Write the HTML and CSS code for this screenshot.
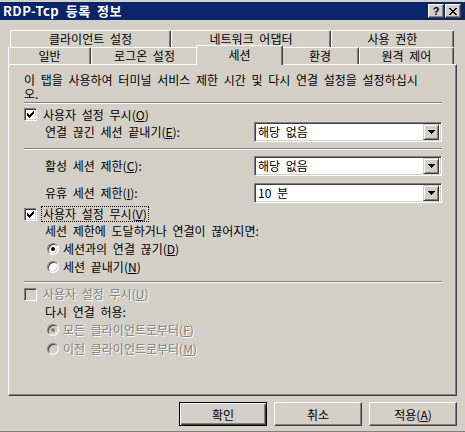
FILE: index.html
```html
<!DOCTYPE html>
<html>
<head>
    <title>RDP-Tcp 등록 정보</title>
    <link rel="stylesheet" href="styles.css">
</head>
<body>
    <div class="window">
        <div class="titlebar">
            <span class="title">RDP-Tcp 등록 정보</span>
            <div class="caption-buttons">
                <span class="caption-btn help">?</span>
                <span class="caption-btn close">
                    <svg width="8" height="7" viewBox="0 0 8 7"><path d="M0 0h2v1H0zM6 0h2v1H6zM1 1h2v1H1zM5 1h2v1H5zM2 2h4v1H2zM3 3h2v1H3zM2 4h4v1H2zM1 5h2v1H1zM5 5h2v1H5zM0 6h2v1H0zM6 6h2v1H6z" fill="#000"/></svg>
                </span>
            </div>
        </div>

        <div class="tabs">
            <div class="tab-row back-row">
                <div class="tab tab-client">클라이언트 설정</div>
                <div class="tab tab-network">네트워크 어댑터</div>
                <div class="tab tab-perm">사용 권한</div>
            </div>
            <div class="tab-row front-row">
                <div class="tab tab-general">일반</div>
                <div class="tab tab-logon">로그온 설정</div>
                <div class="tab tab-session active">세션</div>
                <div class="tab tab-env">환경</div>
                <div class="tab tab-remote">원격 제어</div>
            </div>
        </div>

        <div class="panel">
            <p class="desc">이 탭을 사용하여 터미널 서비스 제한 시간 및 다시 연결 설정을 설정하십시<br>오.</p>
            <div class="separator sep-first"></div>

            <div class="row row-override-o">
                <span class="checkbox">
                    <svg width="7" height="7" viewBox="0 0 7 7"><path d="M6 0h1v1H6zM5 1h2v1H5zM0 2h1v1H0zM4 2h3v1H4zM0 3h2v1H0zM3 3h3v1H3zM0 4h5v1H0zM1 5h3v1H1zM2 6h1v1H2z" fill="#000"/></svg>
                </span>
                <span class="check-label">사용자 설정 무시(<u>O</u>)</span>
            </div>
            <div class="row combo-row row-end">
                <span class="sub-label">연결 끊긴 세션 끝내기(<u>E</u>):</span>
                <div class="combo">
                    <span class="combo-value">해당 없음</span>
                    <span class="combo-btn"><svg width="7" height="4" viewBox="0 0 7 4"><path d="M0 0h7v1H0zM1 1h5v1H1zM2 2h3v1H2zM3 3h1v1H3z" fill="#000"/></svg></span>
                </div>
            </div>

            <div class="separator sep-second"></div>

            <div class="row combo-row row-active">
                <span class="sub-label">활성 세션 제한(<u>C</u>):</span>
                <div class="combo">
                    <span class="combo-value">해당 없음</span>
                    <span class="combo-btn"><svg width="7" height="4" viewBox="0 0 7 4"><path d="M0 0h7v1H0zM1 1h5v1H1zM2 2h3v1H2zM3 3h1v1H3z" fill="#000"/></svg></span>
                </div>
            </div>
            <div class="row combo-row row-idle">
                <span class="sub-label">유휴 세션 제한(<u>I</u>):</span>
                <div class="combo">
                    <span class="combo-value">10 분</span>
                    <span class="combo-btn"><svg width="7" height="4" viewBox="0 0 7 4"><path d="M0 0h7v1H0zM1 1h5v1H1zM2 2h3v1H2zM3 3h1v1H3z" fill="#000"/></svg></span>
                </div>
            </div>

            <div class="row row-override-v">
                <span class="checkbox">
                    <svg width="7" height="7" viewBox="0 0 7 7"><path d="M6 0h1v1H6zM5 1h2v1H5zM0 2h1v1H0zM4 2h3v1H4zM0 3h2v1H0zM3 3h3v1H3zM0 4h5v1H0zM1 5h3v1H1zM2 6h1v1H2z" fill="#000"/></svg>
                </span>
                <span class="check-label focus">사용자 설정 무시(<u>V</u>)</span>
            </div>
            <div class="row row-when">
                <span class="sub-label">세션 제한에 도달하거나 연결이 끊어지면:</span>
            </div>
            <div class="row radio-row row-gap2">
                <span class="radio checked"></span>
                <span>세션과의 연결 끊기(<u>D</u>)</span>
            </div>
            <div class="row radio-row row-gap2">
                <span class="radio"></span>
                <span>세션 끝내기(<u>N</u>)</span>
            </div>

            <div class="separator sep-third"></div>

            <div class="row row-override-u">
                <span class="checkbox disabled"></span>
                <span class="check-label grayed">사용자 설정 무시(<u>U</u>)</span>
            </div>
            <div class="row row-gap2">
                <span class="sub-label">다시 연결 허용:</span>
            </div>
            <div class="row radio-row row-gap2">
                <span class="radio checked disabled"></span>
                <span class="grayed">모든 클라이언트로부터(<u>F</u>)</span>
            </div>
            <div class="row radio-row row-gap3">
                <span class="radio disabled"></span>
                <span class="grayed">이전 클라이언트로부터(<u>M</u>)</span>
            </div>
        </div>

        <div class="buttons">
            <button class="btn default">확인</button>
            <button class="btn">취소</button>
            <button class="btn">적용(<u>A</u>)</button>
        </div>
    </div>
</body>
</html>
```

FILE: styles.css
```css
body {
    margin: 0;
    background-color: #D4D0C8;
    font-family: "Noto Sans CJK KR", "Noto Sans", sans-serif;
    font-size: 12px;
    word-spacing: 3px;
    line-height: 14px;
    color: #000000;
}

.window {
    width: 465px;
    height: 432px;
    box-sizing: border-box;
    padding-top: 2px;
    border-bottom: 1px solid #808080;
    display: flex;
    flex-direction: column;
    overflow: hidden;
}

/* title bar */
.titlebar {
    height: 18px;
    background: #0A246A;
    display: flex;
    align-items: center;
    justify-content: space-between;
    padding: 0 4px 0 3px;
}
.title {
    color: #FFFFFF;
    font-weight: bold;
    font-size: 13px;
    letter-spacing: 0.5px;
    word-spacing: 3px;
}
.caption-buttons {
    display: flex;
    gap: 1px;
}
.caption-btn {
    width: 16px;
    height: 14px;
    box-sizing: border-box;
    background: #D4D0C8;
    border-top: 1px solid #FFFFFF;
    border-left: 1px solid #FFFFFF;
    border-right: 1px solid #404040;
    border-bottom: 1px solid #404040;
    box-shadow: inset -1px -1px #808080;
    display: flex;
    align-items: center;
    justify-content: center;
}
.caption-btn.help {
    font-family: "Liberation Sans", Arial, sans-serif;
    font-weight: bold;
    font-size: 11px;
    line-height: 12px;
}

/* tabs */
.tabs {
    margin-top: 10px;
}
.tab-row {
    display: flex;
    height: 17px;
}
.back-row {
    margin-left: 10px;
}
.front-row {
    margin-left: 8px;
}
.tab {
    flex-shrink: 0;
    box-sizing: border-box;
    height: 17px;
    background: #D4D0C8;
    border-top: 1px solid #FFFFFF;
    border-left: 1px solid #FFFFFF;
    border-right: 1px solid #404040;
    box-shadow: inset -1px 0 #808080;
    border-radius: 2px 2px 0 0;
    text-align: center;
    line-height: 16px;
    white-space: nowrap;
}
.tab-client { width: 161px; }
.tab-network { width: 160px; }
.tab-perm { width: 123px; }
.tab-general { width: 83px; }
.tab-logon { width: 107px; }
.tab-session { width: 83px; }
.tab-env { width: 78px; }
.tab-remote { width: 95px; }

.tab.active {
    position: relative;
    z-index: 2;
    width: 87px;
    height: 20px;
    margin: -2px -2px 0 -2px;
    line-height: 17px;
}

/* property page */
.panel {
    position: relative;
    z-index: 1;
    height: 332px;
    margin: 0 8px;
    box-sizing: border-box;
    border-top: 1px solid #FFFFFF;
    border-left: 1px solid #FFFFFF;
    border-right: 1px solid #404040;
    border-bottom: 1px solid #404040;
    box-shadow: inset -1px -1px #808080;
    padding: 8px 14px 0 15px;
    display: flex;
    flex-direction: column;
}
.desc {
    margin: 0;
    line-height: 14px;
    white-space: nowrap;
}
.separator {
    height: 0;
    border-top: 1px solid #808080;
    border-bottom: 1px solid #FFFFFF;
}
.sep-first { margin-top: 1px; }
.sep-second { margin-top: 6px; }
.sep-third { margin-top: 6px; }

.row {
    display: flex;
    align-items: center;
    height: 16px;
    white-space: nowrap;
}
.row-override-o { margin-top: 3px; height: 15px; }
.combo-row {
    height: 20px;
    justify-content: space-between;
}
.row-active { margin-top: 6px; }
.row-idle { margin-top: 7px; }
.row-override-v { margin-top: 3px; }
.row-when { margin-top: 1px; }
.row-override-u { margin-top: 3px; }
.row-gap2 { margin-top: 2px; }
.row-gap3 { margin-top: 3px; }

.sub-label {
    padding-left: 21px;
}

/* checkbox */
.checkbox {
    width: 13px;
    height: 13px;
    box-sizing: border-box;
    flex-shrink: 0;
    background: #FFFFFF;
    border-top: 1px solid #808080;
    border-left: 1px solid #808080;
    border-right: 1px solid #FFFFFF;
    border-bottom: 1px solid #FFFFFF;
    box-shadow: inset 1px 1px #404040, inset -1px -1px #D4D0C8;
    display: flex;
    align-items: center;
    justify-content: center;
}
.checkbox.disabled {
    background: #D4D0C8;
}
.check-label {
    margin-left: 5px;
    padding: 0 1px;
    line-height: 14px;
}
.focus {
    outline: 1px dotted #000000;
}

/* radio */
.radio-row {
    padding-left: 23px;
}
.radio-row span:last-child {
    margin-left: 4px;
}
.radio {
    position: relative;
    width: 12px;
    height: 12px;
    box-sizing: border-box;
    flex-shrink: 0;
    border-radius: 50%;
    background: #FFFFFF;
    border: 1px solid;
    border-color: #808080 #FFFFFF #FFFFFF #808080;
    box-shadow: inset 1px 1px #404040, inset -1px -1px #D4D0C8;
}
.radio.checked::after {
    content: "";
    position: absolute;
    left: 3px;
    top: 3px;
    width: 4px;
    height: 4px;
    border-radius: 50%;
    background: #000000;
}
.radio.disabled {
    background: #D4D0C8;
}
.radio.disabled.checked::after {
    background: #808080;
}

.grayed {
    color: #808080;
    text-shadow: 1px 1px 0 #FFFFFF;
}

/* combo box */
.combo {
    width: 188px;
    height: 20px;
    box-sizing: border-box;
    background: #FFFFFF;
    border-top: 1px solid #808080;
    border-left: 1px solid #808080;
    border-right: 1px solid #FFFFFF;
    border-bottom: 1px solid #FFFFFF;
    box-shadow: inset 1px 1px #404040, inset -1px -1px #D4D0C8;
    padding: 2px;
    display: flex;
    align-items: center;
}
.combo-value {
    flex: 1;
    padding-left: 1px;
    line-height: 14px;
}
.combo-btn {
    width: 16px;
    height: 16px;
    box-sizing: border-box;
    background: #D4D0C8;
    border-top: 1px solid #D4D0C8;
    border-left: 1px solid #D4D0C8;
    border-right: 1px solid #404040;
    border-bottom: 1px solid #404040;
    box-shadow: inset 1px 1px #FFFFFF, inset -1px -1px #808080;
    display: flex;
    align-items: center;
    justify-content: center;
}

/* dialog buttons */
.buttons {
    display: flex;
    justify-content: flex-end;
    gap: 7px;
    margin-top: 6px;
    padding-right: 8px;
}
.btn {
    width: 88px;
    height: 24px;
    box-sizing: border-box;
    margin: 0;
    padding: 0;
    font-family: "Noto Sans CJK KR", "Noto Sans", sans-serif;
    font-size: 12px;
    color: #000000;
    background: #D4D0C8;
    border-top: 1px solid #FFFFFF;
    border-left: 1px solid #FFFFFF;
    border-right: 1px solid #404040;
    border-bottom: 1px solid #404040;
    box-shadow: inset -1px -1px #808080;
}
.btn.default {
    border: 1px solid #000000;
    box-shadow: inset 1px 1px #FFFFFF, inset -1px -1px #404040, inset -2px -2px #808080;
}
```
